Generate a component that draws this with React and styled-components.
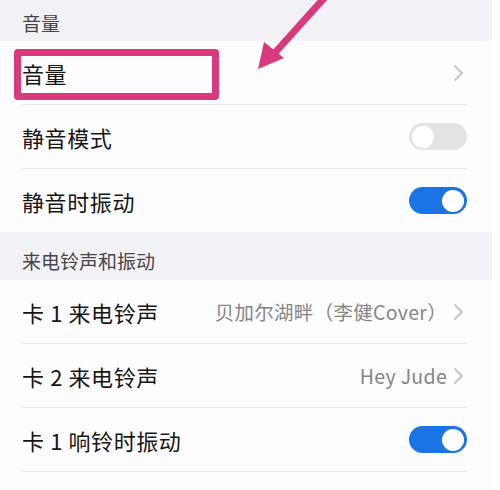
import React from 'react';
import styled, { createGlobalStyle } from 'styled-components';

const GlobalStyle = createGlobalStyle`
  html, body {
    margin: 0;
    padding: 0;
    background: #ffffff;
  }
  body {
    font-family: "Noto Sans CJK SC", "Noto Sans", sans-serif;
  }
`;

const Screen = styled.div`
  position: relative;
  width: 492px;
  height: 490px;
  overflow: hidden;
  background: #f2f1f6;
`;

const SectionHeader = styled.div`
  height: ${(p) => p.h}px;
  display: flex;
  align-items: center;
  padding: ${(p) => p.shift}px 22px 0;
  box-sizing: border-box;
  font-size: 19px;
  color: #454545;
`;

const Group = styled.div`
  background: #fdfcff;
`;

const Row = styled.div`
  height: 63px;
  margin-left: 22px;
  margin-right: 25px;
  display: flex;
  align-items: center;
  justify-content: space-between;
  border-bottom: ${(p) => (p.last ? 'none' : '1px solid #e6e5ea')};
`;

const Title = styled.span`
  font-size: 22px;
  color: #161616;
  letter-spacing: 0.6px;
`;

const Right = styled.div`
  display: flex;
  align-items: center;
  gap: 6px;
`;

const Value = styled.span`
  font-size: 19.5px;
  color: #858585;
  letter-spacing: 0.3px;
`;

const Chevron = styled.svg`
  width: 12px;
  height: 18px;
  margin-right: 2px;
`;

const Track = styled.div`
  width: 58px;
  height: 27px;
  border-radius: 14px;
  background: ${(p) => (p.on ? '#1a74e6' : '#e3e3e6')};
  display: flex;
  align-items: center;
  justify-content: ${(p) => (p.on ? 'flex-end' : 'flex-start')};
  padding: 0 3px;
  box-sizing: border-box;
`;

const Knob = styled.div`
  width: 22px;
  height: 22px;
  border-radius: 50%;
  background: #ffffff;
`;

const Highlight = styled.div`
  position: absolute;
  left: 14px;
  top: 49px;
  width: 205px;
  height: 51px;
  box-sizing: border-box;
  border: 7px solid #d93a7c;
  border-radius: 4px;
`;

const Arrow = styled.svg`
  position: absolute;
  left: 250px;
  top: 0;
  width: 90px;
  height: 80px;
`;

const Arrowhead = () => (
  <Chevron viewBox="0 0 12 18">
    <path d="M2 2 L9 9 L2 16" fill="none" stroke="#c4c4c8" strokeWidth="1.8" strokeLinecap="round" strokeLinejoin="round" />
  </Chevron>
);

const Toggle = ({ on }) => (
  <Track on={on}>
    <Knob />
  </Track>
);

export default function App() {
  return (
    <>
      <GlobalStyle />
      <Screen>
        <SectionHeader h={41} shift={4}>音量</SectionHeader>
        <Group>
          <Row>
            <Title>音量</Title>
            <Arrowhead />
          </Row>
          <Row>
            <Title>静音模式</Title>
            <Toggle />
          </Row>
          <Row last>
            <Title>静音时振动</Title>
            <Toggle on />
          </Row>
        </Group>
        <SectionHeader h={48} shift={8}>来电铃声和振动</SectionHeader>
        <Group>
          <Row>
            <Title>卡 1 来电铃声</Title>
            <Right>
              <Value>贝加尔湖畔（李健Cover）</Value>
              <Arrowhead />
            </Right>
          </Row>
          <Row>
            <Title>卡 2 来电铃声</Title>
            <Right>
              <Value>Hey Jude</Value>
              <Arrowhead />
            </Right>
          </Row>
          <Row>
            <Title>卡 1 响铃时振动</Title>
            <Toggle on />
          </Row>
          <Row last>
            <Title>卡 2 响铃时振动</Title>
            <Toggle on />
          </Row>
        </Group>
        <Highlight />
        <Arrow viewBox="0 0 90 80">
          <line x1="76" y1="-4" x2="22" y2="56" stroke="#d93a7c" strokeWidth="7" strokeLinecap="round" />
          <polygon points="8,69 14,42 34,58" fill="#d93a7c" />
        </Arrow>
      </Screen>
    </>
  );
}
